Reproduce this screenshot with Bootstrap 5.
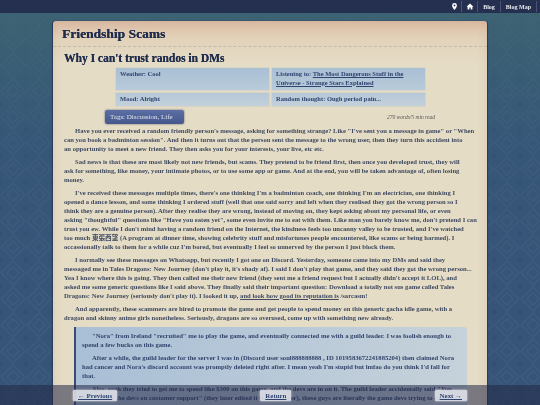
<!DOCTYPE html>
<html lang="en">
<head>
<meta charset="utf-8">
<title>Friendship Scams</title>
<link rel="stylesheet" href="https://cdn.jsdelivr.net/npm/bootstrap@5.3.0/dist/css/bootstrap.min.css">
<style>
html,body{height:100%;overflow:hidden}
body{font-family:"Liberation Serif","Noto Sans CJK TC",serif;font-weight:700;color:#3f4a60;
background-color:#365578;
background-image:linear-gradient(180deg,rgba(62,104,112,.75),rgba(56,90,120,.35) 35%,rgba(50,78,118,.1) 70%),
 url("data:image/svg+xml,%3Csvg xmlns='http://www.w3.org/2000/svg' width='26' height='26'%3E%3Cg fill='none' stroke='%23ffffff' stroke-opacity='.04' stroke-width='1.5'%3E%3Cpath d='M13 1 25 13 13 25 1 13Z'/%3E%3Cpath d='M13 7 19 13 13 19 7 13Z'/%3E%3C/g%3E%3Cpath d='M0 0h3L0 3ZM26 0v3L23 0ZM0 26v-3L3 26ZM26 26h-3L26 23Z' fill='%23000000' fill-opacity='.06'/%3E%3C/svg%3E");}
.soft{filter:blur(.3px)}
.topbar{height:13px;background:#252f50;color:#e8e8ee;font-size:6px;padding:0 3px 0 0}
.topbar .tb-item{height:11px;padding:0 5px;border-right:1px solid #4a5474;display:flex;align-items:center;line-height:1}
.topbar .tb-item.tb-icon{padding:0 3.5px}
.topbar svg{width:7px;height:7px;fill:#fff;display:block}
.topbar svg.wide{width:8px}
.sheet{width:434px;margin:8px auto 0 53px;height:400px;overflow:hidden;border-radius:3px 3px 0 0;
 background:linear-gradient(180deg,#dcbca4 0,#e2d3ba 18px,#e5dcc6 44px);box-shadow:1px 0 1px #2a3a5c,-1px 0 1px #2a3a5c,inset 0 0 8px rgba(190,150,120,.3);padding:0 18px 0 11px}
.sheet-title{font-size:13.5px;line-height:16px;color:#1f2c4c;margin:0 -18px 0 -11px;padding:5px 0 4px 9px;border-bottom:1px dashed #c4bba6;text-shadow:.25px 0 0 #1f2c4c}
.post-title{font-size:11.5px;line-height:14px;color:#1f2c4c;margin:4px 0 3px 0;text-shadow:.2px 0 0 #1f2c4c}
.infos{margin-left:52px;width:309px;display:grid;grid-template-columns:153px 153px;gap:3px 3px;font-size:6.5px;line-height:8.8px;color:#2f4470}
.info-box{background:linear-gradient(180deg,#a9bfd4,#b9cbda);padding:2px 4px;box-shadow:0 0 1px rgba(120,150,180,.7);white-space:nowrap}
.info-box a{color:#2f4470}
.info-low{background:linear-gradient(180deg,#b6c7d7,#c4d1dc);height:13px}
.info-tall{height:22px}
.tagline{display:flex;justify-content:space-between;align-items:center;margin:4px 0 3px 41px;width:330px}
.tagpill{background:linear-gradient(180deg,#5b6fa4,#46578c);color:#dfe4ef;font-size:7px;font-weight:400;line-height:10px;padding:2px 5px;border-radius:2px;width:79px;height:14px;white-space:nowrap;box-shadow:0 0 2px rgba(40,50,90,.8)}
.wc{font-size:5.5px;font-style:italic;font-weight:400;color:#555}
.prose{font-size:6.62px;line-height:8.9px;color:#3f4a60;white-space:nowrap}
.prose p{margin:0 0 4.4px;text-indent:11px}
.prose a{color:#3f4a60}
.pull{margin:4px 0 0 10px;width:393px;border-left:2px solid #3a4a78;background:linear-gradient(90deg,#a9bfd6,#c6d2da);padding:5px 6px 0;color:#33446c;white-space:nowrap;border-radius:0 3px 3px 0}
.pull p{text-indent:10px}
.footbar{position:fixed;left:0;right:0;bottom:0;height:20px;background:rgba(35,40,70,.55);display:flex;justify-content:space-between;align-items:flex-start;padding:5px 73px 0}
.foot-btn{background:rgba(226,229,236,.88);color:#2f4470;font-size:6.9px;line-height:7px;padding:2px 5px;text-decoration:underline;box-shadow:0 0 2px #eee;white-space:nowrap;border-radius:1px}
</style>
</head>
<body>
<nav class="topbar soft d-flex justify-content-end align-items-center">
  <span class="tb-item tb-icon"><svg viewBox="0 0 16 16"><path fill-rule="evenodd" d="M8 0a5.500 5.500 0 0 0-5.500 5.500C2.500 9.500 8 16 8 16s5.500-6.500 5.500-10.500A5.500 5.500 0 0 0 8 0zm0 3.500a2 2 0 1 1 0 4 2 2 0 0 1 0-4z"/></svg></span>
  <span class="tb-item tb-icon"><svg class="wide" viewBox="0 0 16 16"><path d="M8 1 0 8.500h2.500V15h4v-4.500h3V15h4V8.500H16z"/></svg></span>
  <span class="tb-item">Blog</span>
  <span class="tb-item">Blog Map</span>
</nav>
<main class="sheet soft">
  <h1 class="sheet-title fw-bold">Friendship Scams</h1>
  <h2 class="post-title fw-bold">Why I can't trust randos in DMs</h2>
  <section class="infos">
    <div class="info-box info-tall">Weather: Cool</div>
    <div class="info-box info-tall">Listening to: <a href="#">The Most Dangerous Stuff in the<br>Universe - Strange Stars Explained</a></div>
    <div class="info-box info-low">Mood: Alright</div>
    <div class="info-box info-low">Random thought: Ough period pain...</div>
  </section>
  <div class="tagline">
    <span class="tagpill">Tags: Discussion, Life</span>
    <span class="wc">270 words/5 min read</span>
  </div>
  <article class="prose">
    <p>Have you ever received a random friendly person's message, asking for something strange? Like "I've sent you a message in game" or "When<br>can you book a badminton session". And then it turns out that the person sent the message to the wrong user, then they turn this accident into<br>an opportunity to meet a new friend. They then asks you for your interests, your live, etc etc.</p>
    <p>Sad news is that these are most likely not new friends, but scams. They pretend to be friend first, then once you developed trust, they will<br>ask for something, like money, your intimate photos, or to use some app or game. And at the end, you will be taken advantage of, often losing<br>money.</p>
    <p>I've received these messages multiple times, there's one thinking I'm a badminton coach, one thinking I'm an electrician, one thinking I<br>opened a dance lesson, and some thinking I ordered stuff (well that one said sorry and left when they realised they got the wrong person so I<br>think they are a genuine person). After they realise they are wrong, instead of moving on, they kept asking about my personal life, or even<br>asking "thoughtful" questions like "Have you eaten yet", some even invite me to eat with them. Like man you barely know me, don't pretend I can<br>trust you ew. While I don't mind having a random friend on the Internet, the kindness feels too uncanny valley to be trusted, and I've watched<br>too much 東張西望 (A program at dinner time, showing celebrity stuff and misfortunes people encountered, like scams or being harmed). I<br>occassionally talk to them for a while cuz I'm bored, but eventually I feel so unnerved by the person I just block them.</p>
    <p>I normally see these messages on Whatsapp, but recently I got one on Discord. Yesterday, someone came into my DMs and said they<br>messaged me in Tales Dragons: New Journey (don't play it, it's shady af). I said I don't play that game, and they said they got the wrong person...<br>Yea I know where this is going. They then called me their new friend (they sent me a friend request but I actually didn't accept it LOL), and<br>asked me some generic questions like I said above. They finally said their important question: Download a totally not sus game called Tales<br>Dragons: New Journey (seriously don't play it). I looked it up, <a href="#">and look how good its reputation is</a> /sarcasm!</p>
    <p>And apparently, these scammers are hired to promote the game and get people to spend money on this generic gacha idle game, with a<br>dragon and skinny anime girls nonetheless. Seriously, dragons are so overused, come up with something new already.</p>
    <blockquote class="pull">
      <p>"Nora" from Ireland "recruited" me to play the game, and eventually connected me with a guild leader. I was foolish enough to<br>spend a few bucks on this game.</p>
      <p>After a while, the guild leader for the server I was in (Discord user soul888888888 , ID 1019583672241885204) then claimed Nora<br>had cancer and Nora's discord account was promptly deleted right after. I mean yeah I'm stupid but lmfao do you think I'd fall for<br>that.</p>
      <p>Also, yeah they tried to get me to spend like $300 on this game, and the devs are in on it. The guild leader accidentally said "You<br>can contact the devs on customer support" (they later edited it but whatever), these guys are literally the game devs trying to make<br>bucks by pretending to be friends in a story.</p>
    </blockquote>
  </article>
</main>
<div class="footbar">
  <a class="foot-btn" href="#">← Previous</a>
  <a class="foot-btn" href="#">Return</a>
  <a class="foot-btn" href="#">Next →</a>
</div>
<script src="https://cdn.jsdelivr.net/npm/bootstrap@5.3.0/dist/js/bootstrap.bundle.min.js"></script>
</body>
</html>
